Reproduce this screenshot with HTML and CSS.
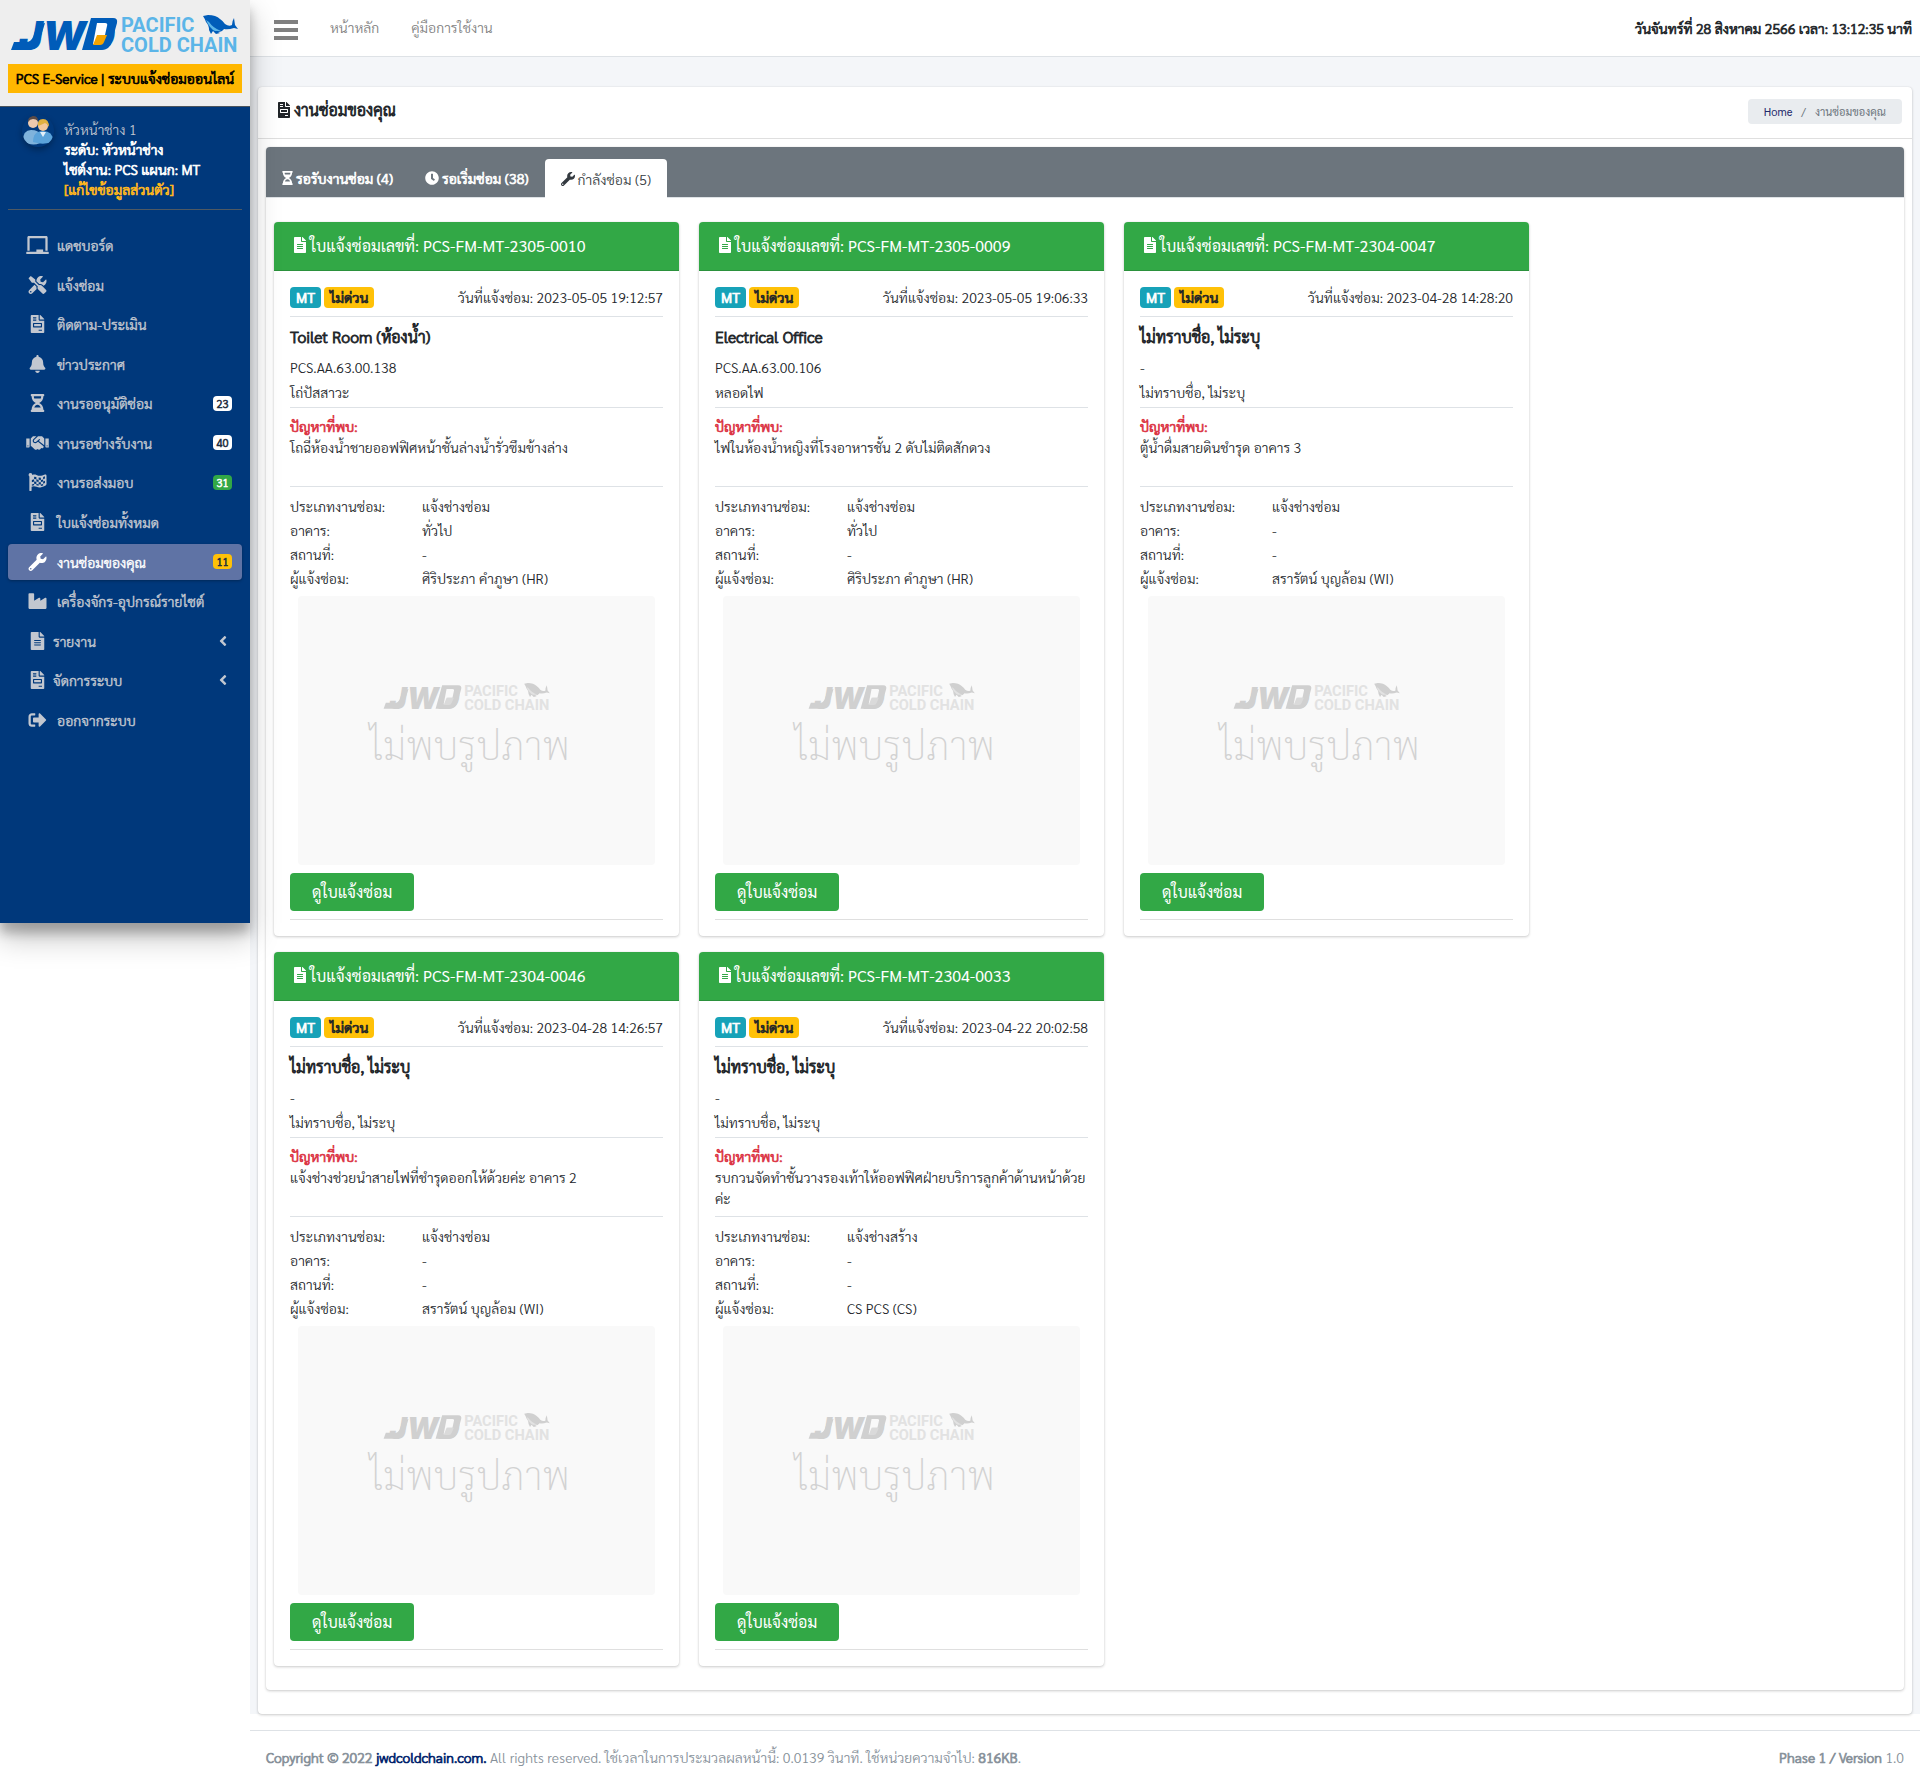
FILE: index.html
```html
<!DOCTYPE html>
<html lang="th">
<head>
<meta charset="utf-8">
<title>PCS E-Service | ระบบแจ้งซ่อมออนไลน์</title>
<link rel="stylesheet" href="styles.css">
</head>
<body>
<svg class="sprite" aria-hidden="true">
  <symbol id="file" viewBox="0 0 384 512"><path d="M224 136V0H24C10.7 0 0 10.7 0 24v464c0 13.3 10.7 24 24 24h336c13.3 0 24-10.7 24-24V160H248c-13.2 0-24-10.8-24-24zm64 236c0 6.600-5.400 12-12 12H108c-6.600 0-12-5.400-12-12v-8c0-6.600 5.400-12 12-12h168c6.600 0 12 5.400 12 12v8zm0-64c0 6.600-5.400 12-12 12H108c-6.600 0-12-5.400-12-12v-8c0-6.600 5.400-12 12-12h168c6.600 0 12 5.400 12 12v8zm0-72v8c0 6.600-5.400 12-12 12H108c-6.600 0-12-5.400-12-12v-8c0-6.600 5.400-12 12-12h168c6.600 0 12 5.400 12 12zm96-114.100v6.100H256V0h6.100c6.400 0 12.500 2.500 17 7l97.900 98c4.500 4.500 7 10.600 7 16.900z"/></symbol>
  <symbol id="invoice" viewBox="0 0 384 512"><path d="M288 256H96v64h192v-64zm89-151L279.100 7c-4.500-4.500-10.600-7-17-7H256v128h128v-6.100c0-6.300-2.500-12.400-7-16.900zm-153 31V0H24C10.700 0 0 10.700 0 24v464c0 13.300 10.700 24 24 24h336c13.300 0 24-10.700 24-24V160H248c-13.200 0-24-10.800-24-24zM64 72c0-4.420 3.580-8 8-8h80c4.420 0 8 3.580 8 8v16c0 4.420-3.580 8-8 8H72c-4.420 0-8-3.580-8-8V72zm0 64c0-4.420 3.580-8 8-8h80c4.420 0 8 3.580 8 8v16c0 4.420-3.580 8-8 8H72c-4.420 0-8-3.580-8-8v-16zm256 304c0 4.420-3.580 8-8 8h-80c-4.420 0-8-3.580-8-8v-16c0-4.420 3.580-8 8-8h80c4.420 0 8 3.580 8 8v16zm0-200v96c0 8.840-7.160 16-16 16H80c-8.840 0-16-7.160-16-16v-96c0-8.840 7.160-16 16-16h224c8.840 0 16 7.160 16 16z"/></symbol>
  <symbol id="wrench" viewBox="0 0 512 512"><path d="M507.730 109.100c-2.240-9.030-13.540-12.090-20.120-5.510l-74.360 74.360-67.880-11.310-11.310-67.880 74.360-74.360c6.620-6.620 3.430-17.900-5.660-20.160-47.380-11.740-99.550.91-136.580 37.930-39.640 39.640-50.550 97.100-34.050 147.200L18.740 402.760c-24.990 24.990-24.990 65.510 0 90.500 24.990 24.990 65.510 24.990 90.500 0l213.210-213.210c50.120 16.710 107.470 5.680 147.370-34.220 37.070-37.070 49.700-89.320 37.910-136.730zM64 472c-13.250 0-24-10.750-24-24 0-13.260 10.750-24 24-24s24 10.740 24 24c0 13.250-10.750 24-24 24z"/></symbol>
  <symbol id="clock" viewBox="0 0 512 512"><path d="M256 8C119 8 8 119 8 256s111 248 248 248 248-111 248-248S393 8 256 8zm57.100 350.100L224.900 294c-3.100-2.300-4.900-5.900-4.900-9.700V116c0-6.600 5.400-12 12-12h48c6.600 0 12 5.400 12 12v137.700l63.500 46.200c5.400 3.900 6.500 11.400 2.600 16.800l-28.200 38.800c-3.900 5.300-11.400 6.500-16.800 2.600z"/></symbol>
  <symbol id="hourglass" viewBox="0 0 384 512"><path d="M360 0H24C10.745 0 0 10.745 0 24v16c0 13.255 10.745 24 24 24 0 90.965 51.016 167.734 120.842 192C75.016 280.266 24 357.035 24 448c-13.255 0-24 10.745-24 24v16c0 13.255 10.745 24 24 24h336c13.255 0 24-10.745 24-24v-16c0-13.255-10.745-24-24-24 0-90.965-51.016-167.734-120.842-192C308.984 231.734 360 154.965 360 64c13.255 0 24-10.745 24-24V24c0-13.255-10.745-24-24-24zm-75.078 384H99.080c17.058-46.797 52.096-80 92.920-80 40.821 0 75.862 33.196 92.922 80zm.019-256H99.078C91.988 108.548 88 86.748 88 64h208c0 22.805-3.987 44.587-11.059 64z"/></symbol>
  <symbol id="tools" viewBox="0 0 512 512"><path d="M501.100 395.700L384 278.600c-23.100-23.100-57.600-27.600-85.400-13.900L192 158.100V96L64 0 0 64l96 128h62.100l106.600 106.600c-13.600 27.800-9.200 62.300 13.900 85.400l117.100 117.100c14.600 14.600 38.200 14.600 52.700 0l52.700-52.700c14.500-14.600 14.500-38.200 0-52.700zM331.700 225c28.300 0 54.900 11 74.900 31l19.400 19.400c15.800-6.900 30.800-16.500 43.800-29.500 37.100-37.100 49.700-89.300 37.900-136.700-2.200-9-13.500-12.100-20.100-5.500l-74.400 74.400-67.900-11.300L334 98.900l74.400-74.400c6.600-6.600 3.400-17.900-5.700-20.200-47.400-11.700-99.600.9-136.600 37.900-28.500 28.500-41.900 66.100-41.200 103.600l82.100 82.100c8.100-1.900 16.500-2.900 24.700-2.900zm-103.900 82l-56.700-56.700L18.700 402.800c-25 25-25 65.500 0 90.500s65.500 25 90.500 0l123.600-123.600c-7.600-19.900-9.900-41.600-5-62.700zM64 472c-13.200 0-24-10.800-24-24 0-13.300 10.700-24 24-24s24 10.700 24 24c0 13.200-10.700 24-24 24z"/></symbol>
  <symbol id="bell" viewBox="0 0 448 512"><path d="M224 512c35.320 0 63.970-28.650 63.970-64H160.030c0 35.350 28.650 64 63.970 64zm215.390-149.710c-19.320-20.760-55.470-51.990-55.470-154.290 0-77.700-54.480-139.900-127.940-155.160V32c0-17.670-14.320-32-31.980-32s-31.980 14.330-31.980 32v20.840C118.560 68.100 64.080 130.300 64.080 208c0 102.300-36.150 133.530-55.470 154.290-6 6.450-8.660 14.160-8.610 21.710.11 16.400 12.980 32 32.100 32h383.800c19.120 0 32-15.600 32.100-32 .05-7.550-2.610-15.270-8.610-21.710z"/></symbol>
  <symbol id="industry" viewBox="0 0 512 512"><path d="M475.115 163.781L336 252.309v-68.280c0-18.916-20.931-30.399-36.885-20.248L160 252.309V56c0-13.255-10.745-24-24-24H24C10.745 32 0 42.745 0 56v400c0 13.255 10.745 24 24 24h464c13.255 0 24-10.745 24-24V184.029c0-18.917-20.931-30.399-36.885-20.248z"/></symbol>
  <symbol id="signout" viewBox="0 0 512 512"><path d="M497 273L329 441c-15 15-41 4.500-41-17v-96H152c-13.300 0-24-10.700-24-24v-96c0-13.300 10.700-24 24-24h136V88c0-21.400 25.900-32 41-17l168 168c9.300 9.400 9.300 24.600 0 34zM192 436v-40c0-6.600-5.400-12-12-12H96c-17.700 0-32-14.300-32-32V160c0-17.700 14.300-32 32-32h84c6.600 0 12-5.400 12-12V76c0-6.600-5.400-12-12-12H96c-53 0-96 43-96 96v192c0 53 43 96 96 96h84c6.600 0 12-5.400 12-12z"/></symbol>
  <symbol id="angle" viewBox="0 0 256 512"><path d="M31.700 239l136-136c9.400-9.400 24.600-9.400 33.900 0l22.600 22.600c9.400 9.400 9.400 24.600 0 33.900L127.900 256l96.400 96.400c9.400 9.400 9.400 24.600 0 33.900L201.700 409c-9.400 9.400-24.600 9.400-33.900 0l-136-136c-9.500-9.400-9.500-24.600-.1-34z"/></symbol>
  <symbol id="laptop" viewBox="0 0 640 512"><path d="M96 64h448v352h64V40c0-22.060-17.940-40-40-40H72C49.940 0 32 17.940 32 40v376h64V64zm528 384H480v-64H288v64H16c-8.840 0-16 7.160-16 16v32c0 8.840 7.160 16 16 16h608c8.840 0 16-7.160 16-16v-32c0-8.840-7.160-16-16-16z"/></symbol>
  <symbol id="handshake" viewBox="0 0 640 512"><path d="M434.700 64h-85.900c-8 0-15.700 3-21.600 8.400l-98.300 90c-.1.1-.2.3-.3.4-16.600 15.600-16.300 40.500-2.100 56 12.700 13.900 39.400 17.600 56.100 2.700.1-.1.3-.1.4-.2l79.900-73.200c6.500-5.900 16.700-5.500 22.600 1 6 6.500 5.500 16.600-1 22.600l-26.100 23.900L504 313.800c2.900 2.400 5.500 5 7.900 7.700V128l-54.600-54.600c-5.900-6-14.100-9.400-22.600-9.400zM544 128.200v223.900c0 17.700 14.300 32 32 32h64V128.200h-96zm48 223.900c-8.800 0-16-7.200-16-16s7.200-16 16-16 16 7.200 16 16-7.200 16-16 16zM0 384h64c17.700 0 32-14.300 32-32V128.200H0V384zm48-63.900c8.800 0 16 7.200 16 16s-7.200 16-16 16-16-7.200-16-16c0-8.900 7.200-16 16-16zm435.900 18.600L334.600 217.500l-30 27.500c-29.700 27.100-75.200 24.500-101.700-4.400-26.900-29.400-24.800-74.900 4.400-101.700L289.100 64h-83.800c-8.500 0-16.600 3.400-22.600 9.400L128 128v223.900h18.300l90.500 81.900c27.400 22.300 67.700 18.100 90-9.300l.2-.2 17.900 15.500c15.900 13 39.400 10.500 52.300-5.400l31.400-38.600 5.400 4.400c13.700 11.100 33.900 9.100 45-4.700l9.500-11.700c11.200-13.800 9.100-33.900-4.600-45.100z"/></symbol>
  <symbol id="flag" viewBox="0 0 512 512"><path fill-rule="evenodd" d="M56 0a56 56 0 0 0-32 100v388q0 24 24 24h16q24 0 24-24v-94c100-50 160 36 270 10 50-10 90-30 130-52q24-14 24-36V80c0-30-22-46-46-34-110 50-170 40-240 8-40-18-80-14-115 0Q108 0 56 0zM160 110l64 6v64l-64-6zM224 180l64 16v62l-64-14zM288 130l64 6v62l-64-4zM352 196l64-14v62l-64 14zM416 112l52-22v64l-52 24zM96 196l64-20v64l-64 20zM160 240l64 6v64l-64-6zM288 260l64 2v64l-64-4zM416 242l52-22v64l-52 24zM224 310l64 12v40l-64-14zM96 326l64-20v40l-64 18zM352 326l64-16v44l-64 14z"/></symbol>
  <symbol id="logo" viewBox="0 0 236 56" overflow="visible">
    <g class="logo-main">
      <path d="M3 38h12q5 0 7-5l4-12 8-2-6 19q-3 8-11 8H0z"/>
      <text class="logo-mark" x="8" y="46">JWD</text>
      <path d="M80 14h22q5 0 4 5l-5 18q-2 9-11 9H71z"/>
    </g>
    <path class="logo-hole" d="M86 19h8q3 0 2 3l-2 9h-7l-2 9h-3z"/>
    <path class="logo-gold" d="M86 31h10l-3 7q-1 3-4 3h-7z"/>
    <g class="logo-sub">
      <text class="logo-word" x="110" y="28">PACIFIC</text>
      <text class="logo-word" x="110" y="48">COLD CHAIN</text>
    </g>
    <path class="logo-fish" d="M192 12l5-1q8 0 12 4 3 2 5 5 4 3 7 1 0-4 2-7l1 7 3 4-4-1q-6 2-10 1-2 3-6 3l2 1-4 1-3-3-2 3-2-4q0-5-3-8-1-3-3-6z"/>
    <path class="logo-sub" d="M195 16q4 9 9 11l6 0q-8-3-12-9z"/>
  </symbol>
  <symbol id="users" viewBox="0 0 32 32">
    <path fill="#7fb3dc" d="M1 26q0-11 8-11t9 5v8q-8 4-17-2z"/>
    <circle cx="11" cy="8" r="5" fill="#edc9ad"/><path fill="#5a4a46" d="M6 7q0-6 5-6t5 5q-2-2-5-2t-5 3z"/>
    <path fill="#5ba3da" d="M11 27q0-11 10-11t10 10q-8 5-20 1z"/><path fill="#e4f1fa" d="M18 17l3 5 3-5z"/>
    <circle cx="21" cy="11" r="5" fill="#f3c79a"/><path fill="#e0b040" d="M16 11q-1-7 5-7t6 8q-1-3-4-4-4 2-7 3z"/>
  </symbol>
</svg>

<div class="layout">
  <aside class="sidebar">
    <a class="brand" href="#">
      <svg class="logo brand-logo" role="img" aria-label="JWD Pacific Cold Chain"><use href="#logo"/></svg>
      <span class="brand-text">PCS E-Service | ระบบแจ้งซ่อมออนไลน์</span>
    </a>
    <div class="user">
      <svg class="avatar" aria-hidden="true"><use href="#users"/></svg>
      <div class="user-info">
        <a class="user-name" href="#">หัวหน้าช่าง 1</a>
        <span>ระดับ: หัวหน้าช่าง</span>
        <span>ไซต์งาน: PCS แผนก: MT</span>
        <a class="user-edit" href="#">[แก้ไขข้อมูลส่วนตัว]</a>
      </div>
    </div>
    <nav>
      <ul class="menu">
        <li><a href="#"><svg class="mi"><use href="#laptop"/></svg><span>แดชบอร์ด</span></a></li>
        <li><a href="#"><svg class="mi"><use href="#tools"/></svg><span>แจ้งซ่อม</span></a></li>
        <li><a href="#"><svg class="mi"><use href="#invoice"/></svg><span>ติดตาม-ประเมิน</span></a></li>
        <li><a href="#"><svg class="mi"><use href="#bell"/></svg><span>ข่าวประกาศ</span></a></li>
        <li><a href="#"><svg class="mi"><use href="#hourglass"/></svg><span>งานรออนุมัติซ่อม</span><b class="count">23</b></a></li>
        <li><a href="#"><svg class="mi"><use href="#handshake"/></svg><span>งานรอช่างรับงาน</span><b class="count">40</b></a></li>
        <li><a href="#"><svg class="mi"><use href="#flag"/></svg><span>งานรอส่งมอบ</span><b class="count green">31</b></a></li>
        <li><a href="#"><svg class="mi"><use href="#invoice"/></svg><span>ใบแจ้งซ่อมทั้งหมด</span></a></li>
        <li><a href="#" class="active"><svg class="mi"><use href="#wrench"/></svg><span>งานซ่อมของคุณ</span><b class="count yellow">11</b></a></li>
        <li><a href="#"><svg class="mi"><use href="#industry"/></svg><span>เครื่องจักร-อุปกรณ์รายไซต์</span></a></li>
        <li><a href="#" class="tree"><svg class="mi"><use href="#file"/></svg><span>รายงาน</span><svg class="arrow"><use href="#angle"/></svg></a></li>
        <li><a href="#" class="tree"><svg class="mi"><use href="#invoice"/></svg><span>จัดการระบบ</span><svg class="arrow"><use href="#angle"/></svg></a></li>
        <li><a href="#"><svg class="mi"><use href="#signout"/></svg><span>ออกจากระบบ</span></a></li>
      </ul>
    </nav>
  </aside>

  <div class="page">
    <header class="topbar">
      <button class="burger" type="button" aria-label="เมนู"><i></i><i></i><i></i></button>
      <a href="#">หน้าหลัก</a>
      <a href="#">คู่มือการใช้งาน</a>
      <strong class="clock">วันจันทร์ที่ 28 สิงหาคม 2566 เวลา: 13:12:35 นาที</strong>
    </header>

    <main class="content">
      <section class="panel">
        <div class="panel-head">
          <h1><svg class="ic16"><use href="#invoice"/></svg>งานซ่อมของคุณ</h1>
          <nav class="crumbs"><a href="#">Home</a><span>/</span><span>งานซ่อมของคุณ</span></nav>
        </div>
        <div class="box">
          <div class="tabs">
            <a href="#"><svg class="ic14"><use href="#hourglass"/></svg>รอรับงานซ่อม (4)</a>
            <a href="#"><svg class="ic14 wide"><use href="#clock"/></svg>รอเริ่มซ่อม (38)</a>
            <a href="#" class="on"><svg class="ic14 wide"><use href="#wrench"/></svg>กำลังซ่อม (5)</a>
          </div>
          <div class="cards">
            <article class="card">
              <h2><svg class="ic16"><use href="#file"/></svg>ใบแจ้งซ่อมเลขที่: PCS-FM-MT-2305-0010</h2>
              <div class="body">
                <div class="meta"><b class="tag teal">MT</b><b class="tag">ไม่ด่วน</b><span>วันที่แจ้งซ่อม: 2023-05-05 19:12:57</span></div>
                <div class="asset"><h3>Toilet Room (ห้องน้ำ)</h3><p>PCS.AA.63.00.138</p><p>โถ่ปัสสาวะ</p></div>
                <div class="problem"><strong>ปัญหาที่พบ:</strong><p>โถฉี่ห้องน้ำชายออฟฟิศหน้าชั้นล่างน้ำรั่วซึมข้างล่าง</p></div>
                <dl><dt>ประเภทงานซ่อม:</dt><dd>แจ้งช่างซ่อม</dd><dt>อาคาร:</dt><dd>ทั่วไป</dd><dt>สถานที่:</dt><dd>-</dd><dt>ผู้แจ้งซ่อม:</dt><dd>ศิริประภา คำภูษา (HR)</dd></dl>
                <div class="noimg"><svg class="logo mute"><use href="#logo"/></svg><span>ไม่พบรูปภาพ</span></div>
                <div class="foot"><button type="button">ดูใบแจ้งซ่อม</button></div>
              </div>
            </article>
            <article class="card">
              <h2><svg class="ic16"><use href="#file"/></svg>ใบแจ้งซ่อมเลขที่: PCS-FM-MT-2305-0009</h2>
              <div class="body">
                <div class="meta"><b class="tag teal">MT</b><b class="tag">ไม่ด่วน</b><span>วันที่แจ้งซ่อม: 2023-05-05 19:06:33</span></div>
                <div class="asset"><h3>Electrical Office</h3><p>PCS.AA.63.00.106</p><p>หลอดไฟ</p></div>
                <div class="problem"><strong>ปัญหาที่พบ:</strong><p>ไฟในห้องน้ำหญิงที่โรงอาหารชั้น 2 ดับไม่ติดสักดวง</p></div>
                <dl><dt>ประเภทงานซ่อม:</dt><dd>แจ้งช่างซ่อม</dd><dt>อาคาร:</dt><dd>ทั่วไป</dd><dt>สถานที่:</dt><dd>-</dd><dt>ผู้แจ้งซ่อม:</dt><dd>ศิริประภา คำภูษา (HR)</dd></dl>
                <div class="noimg"><svg class="logo mute"><use href="#logo"/></svg><span>ไม่พบรูปภาพ</span></div>
                <div class="foot"><button type="button">ดูใบแจ้งซ่อม</button></div>
              </div>
            </article>
            <article class="card">
              <h2><svg class="ic16"><use href="#file"/></svg>ใบแจ้งซ่อมเลขที่: PCS-FM-MT-2304-0047</h2>
              <div class="body">
                <div class="meta"><b class="tag teal">MT</b><b class="tag">ไม่ด่วน</b><span>วันที่แจ้งซ่อม: 2023-04-28 14:28:20</span></div>
                <div class="asset"><h3>ไม่ทราบชื่อ, ไม่ระบุ</h3><p>-</p><p>ไม่ทราบชื่อ, ไม่ระบุ</p></div>
                <div class="problem"><strong>ปัญหาที่พบ:</strong><p>ตู้น้ำดื่มสายดินชำรุด อาคาร 3</p></div>
                <dl><dt>ประเภทงานซ่อม:</dt><dd>แจ้งช่างซ่อม</dd><dt>อาคาร:</dt><dd>-</dd><dt>สถานที่:</dt><dd>-</dd><dt>ผู้แจ้งซ่อม:</dt><dd>สรารัตน์ บุญล้อม (WI)</dd></dl>
                <div class="noimg"><svg class="logo mute"><use href="#logo"/></svg><span>ไม่พบรูปภาพ</span></div>
                <div class="foot"><button type="button">ดูใบแจ้งซ่อม</button></div>
              </div>
            </article>
            <article class="card">
              <h2><svg class="ic16"><use href="#file"/></svg>ใบแจ้งซ่อมเลขที่: PCS-FM-MT-2304-0046</h2>
              <div class="body">
                <div class="meta"><b class="tag teal">MT</b><b class="tag">ไม่ด่วน</b><span>วันที่แจ้งซ่อม: 2023-04-28 14:26:57</span></div>
                <div class="asset"><h3>ไม่ทราบชื่อ, ไม่ระบุ</h3><p>-</p><p>ไม่ทราบชื่อ, ไม่ระบุ</p></div>
                <div class="problem"><strong>ปัญหาที่พบ:</strong><p>แจ้งช่างช่วยนำสายไฟที่ชำรุดออกให้ด้วยค่ะ อาคาร 2</p></div>
                <dl><dt>ประเภทงานซ่อม:</dt><dd>แจ้งช่างซ่อม</dd><dt>อาคาร:</dt><dd>-</dd><dt>สถานที่:</dt><dd>-</dd><dt>ผู้แจ้งซ่อม:</dt><dd>สรารัตน์ บุญล้อม (WI)</dd></dl>
                <div class="noimg"><svg class="logo mute"><use href="#logo"/></svg><span>ไม่พบรูปภาพ</span></div>
                <div class="foot"><button type="button">ดูใบแจ้งซ่อม</button></div>
              </div>
            </article>
            <article class="card">
              <h2><svg class="ic16"><use href="#file"/></svg>ใบแจ้งซ่อมเลขที่: PCS-FM-MT-2304-0033</h2>
              <div class="body">
                <div class="meta"><b class="tag teal">MT</b><b class="tag">ไม่ด่วน</b><span>วันที่แจ้งซ่อม: 2023-04-22 20:02:58</span></div>
                <div class="asset"><h3>ไม่ทราบชื่อ, ไม่ระบุ</h3><p>-</p><p>ไม่ทราบชื่อ, ไม่ระบุ</p></div>
                <div class="problem"><strong>ปัญหาที่พบ:</strong><p>รบกวนจัดทำชั้นวางรองเท้าให้ออฟฟิศฝ่ายบริการลูกค้าด้านหน้าด้วยค่ะ</p></div>
                <dl><dt>ประเภทงานซ่อม:</dt><dd>แจ้งช่างสร้าง</dd><dt>อาคาร:</dt><dd>-</dd><dt>สถานที่:</dt><dd>-</dd><dt>ผู้แจ้งซ่อม:</dt><dd>CS PCS (CS)</dd></dl>
                <div class="noimg"><svg class="logo mute"><use href="#logo"/></svg><span>ไม่พบรูปภาพ</span></div>
                <div class="foot"><button type="button">ดูใบแจ้งซ่อม</button></div>
              </div>
            </article>
          </div>
        </div>
      </section>
    </main>

    <footer class="footer">
      <div><strong>Copyright © 2022 <a href="#">jwdcoldchain.com.</a></strong> All rights reserved. ใช้เวลาในการประมวลผลหน้านี้: 0.0139 วินาที. ใช้หน่วยความจำไป: <strong>816KB</strong>.</div>
      <div><strong>Phase 1 / Version</strong> 1.0</div>
    </footer>
  </div>
</div>
</body>
</html>
```
FILE: styles.css
```css
*, *::before, *::after { box-sizing: border-box; }
body {
  margin: 0;
  font: 300 14px/20px Sarabun, "Noto Sans Thai", "Noto Sans", sans-serif;
  color: #212529;
  background: #fff;
}
a { color: inherit; text-decoration: none; }
h1, h2, h3, p, ul, dl, dd { margin: 0; padding: 0; }
svg { fill: currentColor; flex: none; }
button { font: inherit; border: 0; cursor: pointer; }
.sprite { position: absolute; width: 0; height: 0; }

/* Emphasis keeps the light letterforms and thickens their outline */
strong, b, h1, h3, .brand-text, .user-info, .tabs a {
  font-weight: 300;
  -webkit-text-stroke: .05em currentColor;
}

.layout { display: grid; grid-template-columns: 250px minmax(0, 1fr); align-items: start; }

/* Sidebar */
.sidebar {
  position: relative;
  z-index: 2;
  min-height: 923px;
  background: #00387b;
  color: #c2c7d0;
  box-shadow: 0 14px 28px rgba(0, 0, 0, .25), 0 10px 10px rgba(0, 0, 0, .22);
}
.brand {
  display: flex;
  flex-direction: column;
  gap: 4px;
  height: 107px;
  padding: 4px 8px 0;
  background: #eee;
  border-bottom: 1px solid #4b545c;
  color: #000;
}
.logo { --main: #005cb9; --sub: #5bb5e8; --gold: #f5a400; --hole: #fff; display: block; overflow: visible; }
.logo-main { fill: var(--main); }
.logo-sub { fill: var(--sub); }
.logo-gold { fill: var(--gold); }
.logo-hole { fill: var(--hole); }
.logo-fish { fill: var(--main); }
.logo-mark { font: italic 900 40px Inter, sans-serif; }
.logo-word { font: 700 20px Roboto, sans-serif; }
.brand-logo { width: 236px; height: 56px; margin-left: 3px; }
.brand-text {
  height: 29px;
  line-height: 29px;
  background: #ffb700;
  text-align: center;
  white-space: nowrap;
}
.user {
  display: flex;
  gap: 10px;
  margin: 0 8px;
  padding: 8px 0 10px 14px;
  border-bottom: 1px solid #4f5962;
}
.avatar { width: 32px; height: 32px; border-radius: 50%; box-shadow: 0 3px 6px rgba(0, 0, 0, .3); }
.user-info { display: flex; flex-direction: column; padding-top: 4px; color: #fff; white-space: nowrap; }
.user-name { color: #c2c7d0; -webkit-text-stroke: 0; }
.user-edit { color: #ffb81c; }
.menu {
  list-style: none;
  display: grid;
  align-content: space-between;
  height: 511px;
  margin: 17px 8px 0;
}
.menu a { display: flex; align-items: center; gap: 8px; height: 36px; padding: 0 10px 0 18px; border-radius: 4px; white-space: nowrap; }
.menu span { -webkit-text-stroke: .03em currentColor; }
.menu a.tree { gap: 4px; }
.menu .active { background: #5f73a5; color: #fff; box-shadow: 0 1px 3px rgba(0, 0, 0, .3); }
.mi { width: 23px; height: 18px; }
.count {
  margin-left: auto;
  width: 19px;
  height: 15px;
  border-radius: 4px;
  background: #fff;
  color: #1f2d3d;
  font-size: 11px;
  line-height: 15px;
  text-align: center;
}
.count.green { background: #32a846; color: #fff; }
.count.yellow { background: #ffc107; }
.arrow { width: 8px; height: 16px; margin: 0 5px 0 auto; }

/* Top bar */
.topbar {
  display: flex;
  align-items: center;
  gap: 32px;
  height: 57px;
  padding: 0 8px 0 24px;
  border-bottom: 1px solid #dee2e6;
  color: #808080;
}
.topbar a { padding-bottom: 3px; }
.burger { display: grid; gap: 4px; width: 24px; padding: 4px 0 0; background: none; }
.burger i { height: 4px; background: #808080; }
.clock { margin-left: auto; color: #212529; }

/* Main panel */
.content { padding: 30px 8px 0; background: #f4f6f9; }
.panel, .box, .card { background: #fff; border-radius: 4px; box-shadow: 0 0 1px rgba(0, 0, 0, .13), 0 1px 3px rgba(0, 0, 0, .2); }
.panel { padding-bottom: 24px; }
.panel-head {
  display: flex;
  align-items: flex-start;
  justify-content: space-between;
  height: 52px;
  padding: 12px 10px 0 20px;
  border-bottom: 1px solid #dfdfdf;
}
h1, h2 { display: flex; align-items: center; gap: 4px; font-size: 16px; line-height: 21px; }
.ic16 { width: 12px; height: 16px; }
.ic14 { width: 11px; height: 14px; }
.ic14.wide { width: 14px; }
.crumbs { display: flex; gap: 9px; padding: 0 16px; background: #e9ecef; border-radius: 4px; color: #6c757d; font-size: 11px; line-height: 25px; font-weight: 400; }
.crumbs a { color: #1f2a6b; }
.box { margin: 8px 8px 0; padding-bottom: 24px; }
.tabs {
  display: flex;
  align-items: flex-end;
  height: 51px;
  background: #6c757d;
  border-bottom: 1px solid #dee2e6;
  border-radius: 4px 4px 0 0;
  color: #fff;
}
.tabs a { display: flex; align-items: center; gap: 3px; height: 39px; padding: 0 16px; white-space: nowrap; }
.tabs .on { margin-bottom: -1px; background: #fff; border-radius: 4px 4px 0 0; color: #343a40; -webkit-text-stroke: 0; }

/* Repair cards */
.cards { display: grid; grid-template-columns: repeat(auto-fill, 405px); gap: 16px 20px; padding: 24px 8px 0; }
.card h2 { height: 49px; padding: 0 20px 2px; background: #32a846; border-bottom: 1px solid #2b913c; border-radius: 4px 4px 0 0; color: #fff; font-weight: 400; white-space: nowrap; }
.body { padding: 16px; }
.meta { display: flex; gap: 3px; height: 30px; border-bottom: 1px solid #dee2e6; line-height: 21px; white-space: nowrap; }
.meta span { margin-left: auto; }
.tag { height: 21px; padding: 0 6px; background: #ffc107; border-radius: 4px; font-weight: 400; }
.tag.teal { background: #17a2b8; color: #fff; }
.asset { height: 91px; padding-top: 6px; border-bottom: 1px solid #dee2e6; line-height: 25px; }
h3 { margin-bottom: 5px; font-size: 16px; line-height: 27px; }
.problem { height: 79px; padding-top: 8px; border-bottom: 1px solid #dee2e6; line-height: 21px; }
.problem strong { color: #dc3545; }
dl { display: grid; grid-template-columns: 132px 1fr; padding: 7px 0 6px; line-height: 24px; }
.noimg {
  display: flex;
  flex-direction: column;
  align-items: center;
  height: 269px;
  margin: 0 8px 8px;
  padding: 79px 14px 0 0;
  background: #f9f9f9;
  border-radius: 4px;
  color: #d2d2d2;
  font-size: 39px;
  line-height: 56px;
  font-weight: 200;
}
.mute { --main: #d0d0d0; --sub: #e2e2e2; --gold: #dadada; --hole: #f9f9f9; width: 174px; height: 41px; }
.foot { padding-bottom: 8px; border-bottom: 1px solid #dfdfdf; }
.foot button { display: block; height: 38px; padding: 0 22px; background: #32a846; border-radius: 4px; color: #fff; font-size: 16px; font-weight: 400; }

.footer {
  display: flex;
  justify-content: space-between;
  margin-top: 16px;
  padding: 16px;
  border-top: 1px solid #dee2e6;
  color: #869099;
}
.footer a { color: #001f6b; }
```
